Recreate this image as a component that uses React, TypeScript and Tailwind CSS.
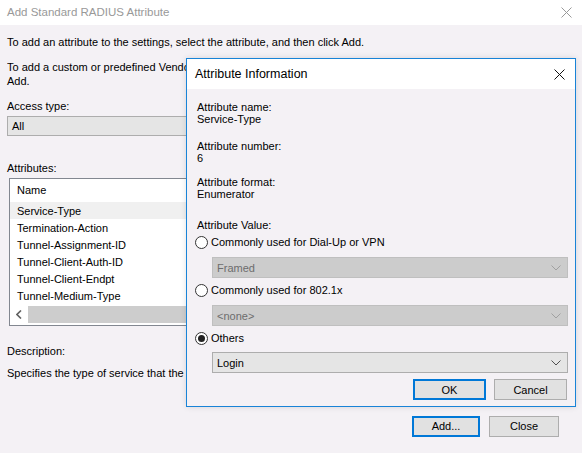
import React from "react";

const font = { fontFamily: '"Liberation Sans", Arial, sans-serif' };

function Chevron({ color }: { color: string }) {
  return (
    <svg width="10" height="6" viewBox="0 0 10 6" className="shrink-0">
      <path d="M0.5 0.5 L5 5 L9.5 0.5" fill="none" stroke={color} strokeWidth="1" />
    </svg>
  );
}

function XIcon({ color, size = 11 }: { color: string; size?: number }) {
  return (
    <svg width={size} height={size} viewBox="0 0 11 11">
      <path d="M0.5 0.5 L10.5 10.5 M10.5 0.5 L0.5 10.5" stroke={color} strokeWidth="1" fill="none" />
    </svg>
  );
}

function Radio({ checked }: { checked?: boolean }) {
  return (
    <span className="w-[13px] h-[13px] rounded-full border border-[#333] bg-white flex items-center justify-center shrink-0">
      {checked && <span className="w-[7px] h-[7px] rounded-full bg-[#222]" />}
    </span>
  );
}

export default function App() {
  const rows = [
    "Service-Type",
    "Termination-Action",
    "Tunnel-Assignment-ID",
    "Tunnel-Client-Auth-ID",
    "Tunnel-Client-Endpt",
    "Tunnel-Medium-Type",
  ];
  return (
    <div className="relative w-[582px] h-[453px] overflow-hidden bg-[#f4f1f5] text-[11px] text-black" style={font}>
      {/* Title bar */}
      <div className="h-[25px] bg-white flex items-center justify-between pl-[7px] pr-[10px]">
        <span className="text-[#999999] text-[11.5px]">Add Standard RADIUS Attribute</span>
        <XIcon color="#999999" />
      </div>
      {/* Body */}
      <div className="pl-[7px] leading-[14px]">
        <div className="mt-[10px]">To add an attribute to the settings, select the attribute, and then click Add.</div>
        <div className="mt-[11px] w-[179px] overflow-hidden whitespace-nowrap">To add a custom or predefined Vendo</div>
        <div>Add.</div>
        <div className="mt-[11px]">Access type:</div>
        <div className="mt-[3px] h-[20px] w-[560px] border border-[#adadad] bg-[#e5e5e5] flex items-center pl-[4px]">All</div>
        <div className="mt-[25px]">Attributes:</div>
        <div className="mt-[3px] ml-[2px] h-[148px] w-[500px] border border-[#828790] bg-white flex flex-col">
          <div className="h-[23px] pl-[7px] pt-[4px]">Name</div>
          <div className="flex-1 flex flex-col">
            {rows.map((r, i) => (
              <div key={r} className={`h-[17px] pl-[7px] flex items-center ${i === 0 ? "bg-[#f0f0f0]" : ""}`}>{r}</div>
            ))}
          </div>
          <div className="h-[17px] flex mb-[2px]">
            <div className="w-[18px] flex items-center justify-center">
              <svg width="6" height="9" viewBox="0 0 6 9">
                <path d="M5 0.5 L1 4.5 L5 8.5" fill="none" stroke="#606060" strokeWidth="1.6" />
              </svg>
            </div>
            <div className="flex-1 bg-[#cdcdcd]" />
          </div>
        </div>
        <div className="mt-[18px]">Description:</div>
        <div className="mt-[8px] w-[179px] overflow-hidden whitespace-nowrap">Specifies the type of service that the u</div>
      </div>
      {/* Bottom buttons */}
      <div className="absolute left-[412px] top-[416px] flex gap-[9px]">
        <div className="w-[68px] h-[21px] border-2 border-[#0078d7] bg-[#e1e1e1] flex items-center justify-center">Add...</div>
        <div className="w-[70px] h-[21px] border border-[#adadad] bg-[#e1e1e1] flex items-center justify-center">Close</div>
      </div>

      {/* Attribute Information dialog */}
      <div className="absolute left-[186px] top-[58px] w-[390px] h-[349px] border border-[#1883d7] bg-[#f4f1f5] flex flex-col shadow-[0_0_6px_rgba(0,0,0,0.12)]">
        <div className="h-[30px] bg-white flex items-center justify-between pl-[8px] pr-[10px] shrink-0">
          <span className="text-[12.5px]">Attribute Information</span>
          <XIcon color="#111" />
        </div>
        <div className="flex flex-col leading-[12px]">
          <div className="pl-[10px] mt-[12px]">Attribute name:</div>
          <div className="pl-[10px]">Service-Type</div>
          <div className="pl-[10px] mt-[15px]">Attribute number:</div>
          <div className="pl-[10px]">6</div>
          <div className="pl-[10px] mt-[12px]">Attribute format:</div>
          <div className="pl-[10px]">Enumerator</div>
          <div className="pl-[10px] mt-[19px]">Attribute Value:</div>

          <div className="mt-[3px] h-[16px] pl-[8px] flex items-center gap-[3px]">
            <Radio />
            <span>Commonly used for Dial-Up or VPN</span>
          </div>
          <div className="mt-[7px] ml-[25px] mr-[7px] h-[21px] border border-[#bfbfbf] bg-[#cccccc] flex items-center justify-between pl-[4px] pr-[6px] text-[#6d6d6d]">
            <span>Framed</span>
            <Chevron color="#a0a0a0" />
          </div>
          <div className="mt-[4px] h-[16px] pl-[8px] flex items-center gap-[3px]">
            <Radio />
            <span>Commonly used for 802.1x</span>
          </div>
          <div className="mt-[7px] ml-[25px] mr-[7px] h-[21px] border border-[#bfbfbf] bg-[#cccccc] flex items-center justify-between pl-[4px] pr-[6px] text-[#6d6d6d]">
            <span>&lt;none&gt;</span>
            <Chevron color="#a0a0a0" />
          </div>
          <div className="mt-[4px] h-[16px] pl-[8px] flex items-center gap-[3px]">
            <Radio checked />
            <span>Others</span>
          </div>
          <div className="mt-[6px] ml-[25px] mr-[7px] h-[21px] border border-[#adadad] bg-[#e5e5e5] flex items-center justify-between pl-[4px] pr-[6px]">
            <span>Login</span>
            <Chevron color="#505050" />
          </div>
          <div className="mt-[6px] mr-[8px] flex justify-end gap-[8px]">
            <div className="w-[73px] h-[21px] border-2 border-[#0078d7] bg-[#e1e1e1] flex items-center justify-center">OK</div>
            <div className="w-[73px] h-[21px] border border-[#adadad] bg-[#e1e1e1] flex items-center justify-center">Cancel</div>
          </div>
        </div>
      </div>
    </div>
  );
}
